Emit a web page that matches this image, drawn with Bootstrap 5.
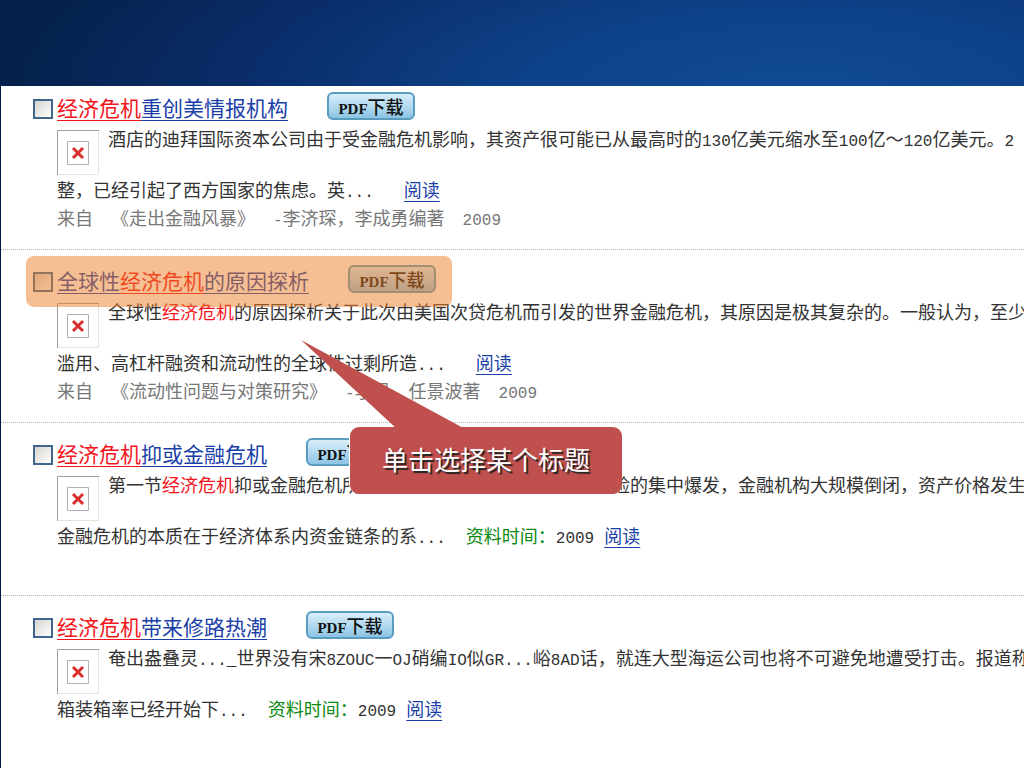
<!DOCTYPE html>
<html lang="zh-CN">
<head>
<meta charset="utf-8">
<meta name="viewport" content="width=device-width, initial-scale=1">
<title>经济危机 - 检索结果</title>
<link href="https://cdn.jsdelivr.net/npm/bootstrap@5.3.0/dist/css/bootstrap.min.css" rel="stylesheet">
<style>
body { font-family: "Noto Sans CJK SC", sans-serif; font-size: 18px; line-height: 28px; color: #333; background: #05173f; }
.banner { height: 86px; background: radial-gradient(ellipse 820px 260px at 78% 110%, #104c96 0%, #0d4187 35%, #0a2d6a 68%, #05204a 98%); }
.results { margin-left: 1px; overflow: hidden; }
.result { min-height: 173px; padding: 15px 0 0 32px; border-top: 1px dotted #b4b4b4; }
.result:first-child { min-height: 163px; padding-top: 6px; border-top: 0; }
.pick.form-check-input { width: 20px; height: 20px; margin: 7px 4px 0 0; border: 2px solid #3f668c; border-radius: 0; background: linear-gradient(135deg, #d4d4d0, #fff); }
.heading { height: 38px; }
.heading h2 { font-size: 21px; line-height: 30px; font-weight: 400; margin: 0; }
.heading a, .read { color: #1a3fa8; text-decoration: underline; text-underline-offset: 4px; text-decoration-thickness: 1px; }
.heading .hit { text-decoration: underline; text-underline-offset: 4px; text-decoration-thickness: 1px; }
.hit { color: #f4141c; }
.pdf { height: 28px; width: 88px; padding: 0; margin-left: 39px; font-size: 18px; line-height: 22px; font-weight: 500; color: #111; border: 2px solid #5a9cc0; border-radius: 6px; background: linear-gradient(#d8eefa, #b4daf0 50%, #8cc4e4); }
.pdf span { font: 700 15px/1 "Liberation Serif", serif; }
.pdf:hover { color: #111; border-color: #35799f; }
.entry { padding-left: 24px; }
.summary { height: 45px; gap: 9px; }
.summary p { line-height: 16px; }
.thumb { width: 42px; height: 45px; }
.half { font-family: "Liberation Mono", monospace; font-size: 16px; line-height: 1; }
.source { color: #777; gap: 18px; }
.more { gap: 30px; }
.dated { gap: 20px; }
.dated > span + span { margin-right: -10px; }
.label { color: #0a8a10; }
.highlight { left: 25px; top: 6px; width: 426px; height: 51px; border-radius: 8px; background: rgba(236, 126, 40, .5); pointer-events: none; }
.callout { left: 300px; top: 90px; width: 321px; z-index: 2; }
.callout svg { height: 90px; width: 170px; }
.bubble { margin: -3px 0 0 49px; height: 67px; border-radius: 9px; background: #c0504d; box-shadow: -1px -1px 0 #fff; color: #fff; font-size: 26px; line-height: 64px; text-shadow: 2px 2px 1px #222; }
</style>
</head>
<body class="d-flex flex-column min-vh-100">
<header class="banner"></header>
<main class="results bg-white flex-grow-1">

<article class="result">
  <div class="heading d-flex align-items-start">
    <input class="pick form-check-input flex-shrink-0" type="checkbox" aria-label="选择 经济危机重创美情报机构">
    <h2><a href="#"><span class="hit">经济危机</span>重创美情报机构</a></h2>
    <button type="button" class="pdf btn"><span>PDF</span>下载</button>
  </div>
  <div class="entry text-nowrap">
    <div class="summary d-flex">
      <svg class="thumb flex-shrink-0" viewBox="0 0 42 45" aria-hidden="true"><use href="#missing"/></svg>
      <p class="m-0">酒店的迪拜国际资本公司由于受金融危机影响，其资产很可能已从最高时的<span class="half">130</span>亿美元缩水至<span class="half">100</span>亿～<span class="half">120</span>亿美元。<span class="half">2</span></p>
    </div>
    <div class="more d-flex"><span>整，已经引起了西方国家的焦虑。英<span class="half">...</span></span><a class="read" href="#">阅读</a></div>
    <div class="source d-flex align-items-baseline"><span>来自</span><span>《走出金融风暴》</span><span><span class="half">-</span>李济琛，李成勇编著</span><span class="half">2009</span></div>
  </div>
</article>

<article class="result position-relative">
  <div class="heading d-flex align-items-start">
    <input class="pick form-check-input flex-shrink-0" type="checkbox" aria-label="选择 全球性经济危机的原因探析">
    <h2><a href="#">全球性<span class="hit">经济危机</span>的原因探析</a></h2>
    <button type="button" class="pdf btn"><span>PDF</span>下载</button>
  </div>
  <div class="entry text-nowrap">
    <div class="summary d-flex">
      <svg class="thumb flex-shrink-0" viewBox="0 0 42 45" aria-hidden="true"><use href="#missing"/></svg>
      <p class="m-0">全球性<span class="hit">经济危机</span>的原因探析关于此次由美国次贷危机而引发的世界金融危机，其原因是极其复杂的。一般认为，至少</p>
    </div>
    <div class="more d-flex"><span>滥用、高杠杆融资和流动性的全球性过剩所造<span class="half">...</span></span><a class="read" href="#">阅读</a></div>
    <div class="source d-flex align-items-baseline"><span>来自</span><span>《流动性问题与对策研究》</span><span><span class="half">-</span>李民，任景波著</span><span class="half">2009</span></div>
  </div>
  <div class="highlight position-absolute"></div>
  <div class="callout position-absolute" role="note">
    <svg class="d-block" viewBox="0 0 170 90" aria-hidden="true"><path d="M0 0 166 90H97Z" fill="#c0504d"/></svg>
    <div class="bubble text-center">单击选择某个标题</div>
  </div>
</article>

<article class="result">
  <div class="heading d-flex align-items-start">
    <input class="pick form-check-input flex-shrink-0" type="checkbox" aria-label="选择 经济危机抑或金融危机">
    <h2><a href="#"><span class="hit">经济危机</span>抑或金融危机</a></h2>
    <button type="button" class="pdf btn"><span>PDF</span>下载</button>
  </div>
  <div class="entry text-nowrap">
    <div class="summary d-flex">
      <svg class="thumb flex-shrink-0" viewBox="0 0 42 45" aria-hidden="true"><use href="#missing"/></svg>
      <p class="m-0">第一节<span class="hit">经济危机</span>抑或金融危机所谓金融危机，就是指金融体系风险的集中爆发，金融机构大规模倒闭，资产价格发生</p>
    </div>
    <div class="dated d-flex"><span>金融危机的本质在于经济体系内资金链条的系<span class="half">...</span></span><span><span class="label">资料时间：</span><span class="half">2009</span></span><a class="read" href="#">阅读</a></div>
  </div>
</article>

<article class="result">
  <div class="heading d-flex align-items-start">
    <input class="pick form-check-input flex-shrink-0" type="checkbox" aria-label="选择 经济危机带来修路热潮">
    <h2><a href="#"><span class="hit">经济危机</span>带来修路热潮</a></h2>
    <button type="button" class="pdf btn"><span>PDF</span>下载</button>
  </div>
  <div class="entry text-nowrap">
    <div class="summary d-flex">
      <svg class="thumb flex-shrink-0" viewBox="0 0 42 45" aria-hidden="true"><use href="#missing"/></svg>
      <p class="m-0">奄出盎叠灵<span class="half">..._</span>世界没有宋<span class="half">8ZOUC</span>一<span class="half">OJ</span>硝编<span class="half">IO</span>似<span class="half">GR...</span>峪<span class="half">8AD</span>话，就连大型海运公司也将不可避免地遭受打击。报道称</p>
    </div>
    <div class="dated d-flex"><span>箱装箱率已经开始下<span class="half">...</span></span><span><span class="label">资料时间：</span><span class="half">2009</span></span><a class="read" href="#">阅读</a></div>
  </div>
</article>
</main>

<svg width="0" height="0" class="position-absolute" aria-hidden="true">
  <defs>
    <g id="missing" fill="none">
      <path d="M41.500 1V44.500H1" stroke="#e6e4d8"/>
      <path d="M.5 45V.5H42" stroke="#a09f98"/>
      <path d="M10.500 11.500h21v23h-21z" stroke="#b0b0bc"/>
      <path d="M16 18l10 10M26 18L16 28" stroke="#d8302c" stroke-width="3"/>
    </g>
  </defs>
</svg>
<script src="https://cdn.jsdelivr.net/npm/bootstrap@5.3.0/dist/js/bootstrap.bundle.min.js"></script>
</body>
</html>
